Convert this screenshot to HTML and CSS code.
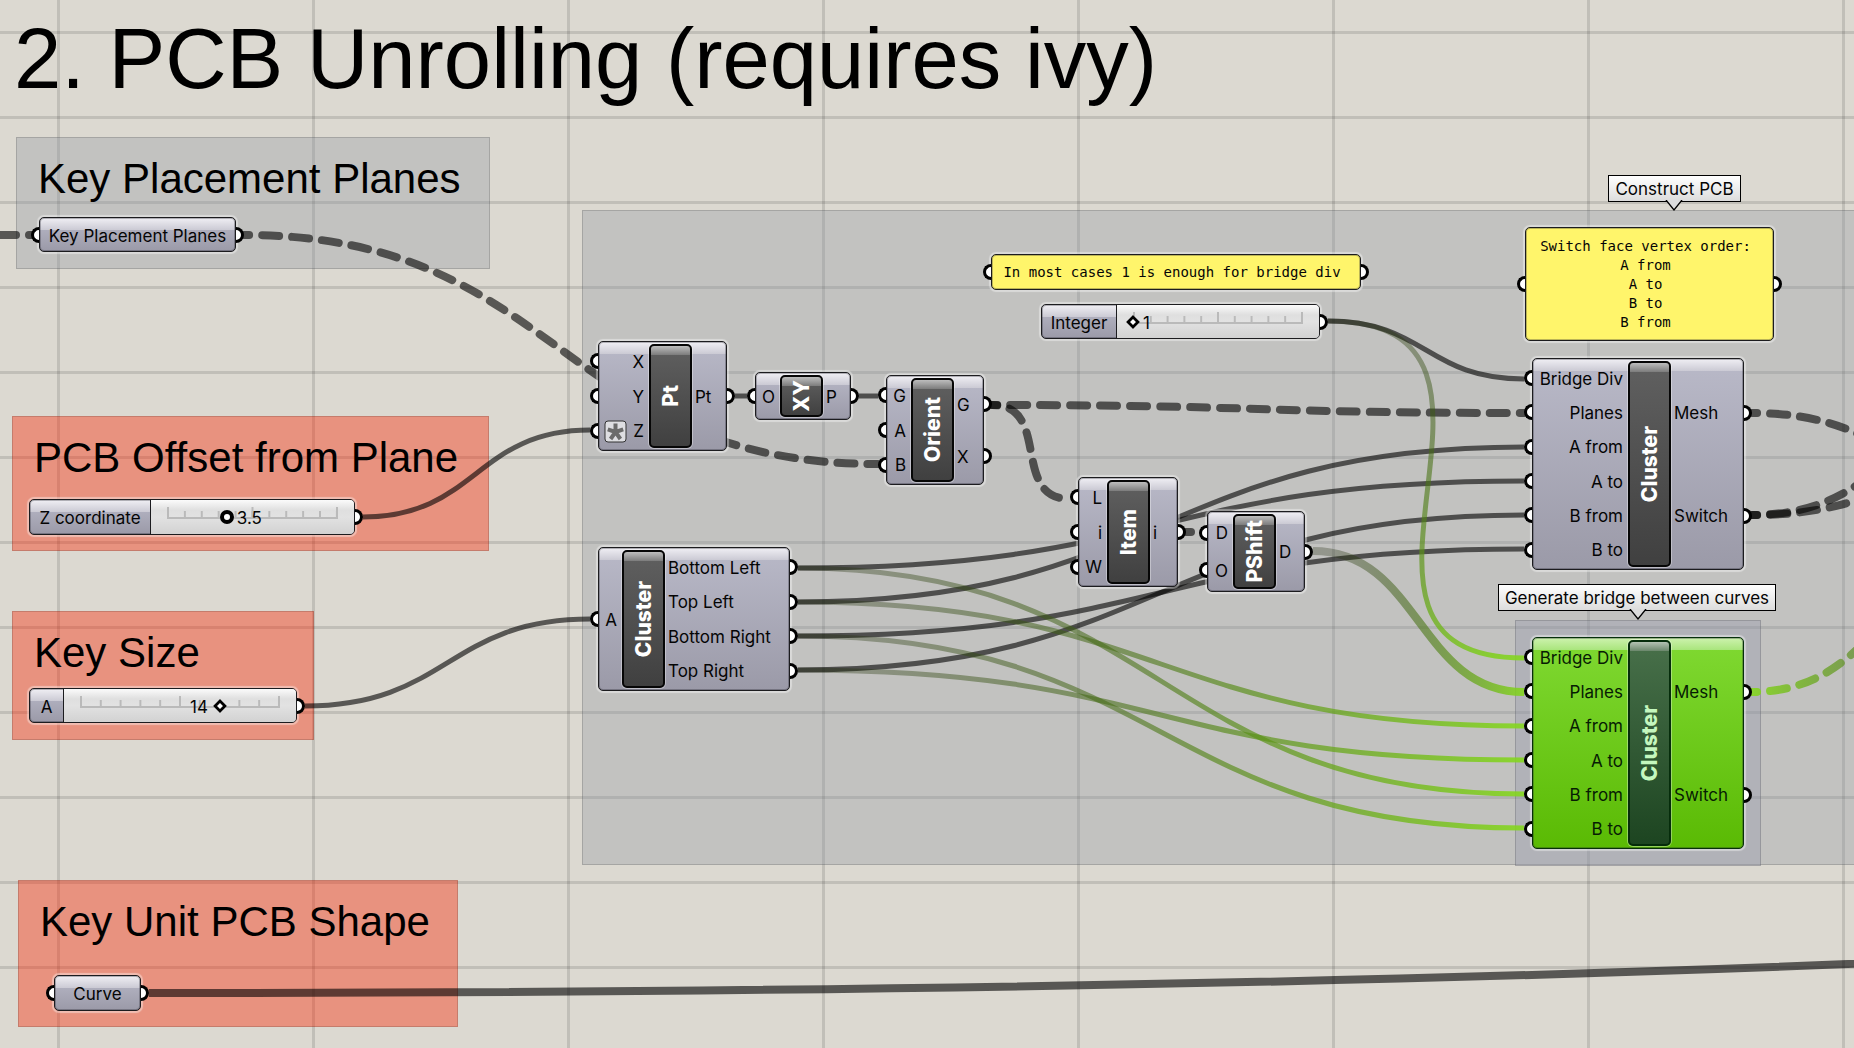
FILE: index.html
```html
<!DOCTYPE html>
<html lang="en">
<head>
<meta charset="utf-8">
<meta name="viewport" content="width=device-width, initial-scale=1">
<title>PCB Unrolling</title>
<link rel="stylesheet" href="styles.css">
</head>
<body>
<main class="canvas">
  <h1 class="title">2. PCB Unrolling (requires ivy)</h1>

  <section class="group red g-offset"><h2>PCB Offset from Plane</h2></section>
  <section class="group gray g-planes"><h2>Key Placement Planes</h2></section>
  <section class="group red g-size"><h2>Key Size</h2></section>
  <section class="group red g-shape"><h2>Key Unit PCB Shape</h2></section>
  <div class="group gray g-main"></div>
  <div class="group violet g-bridge"></div>

  <svg class="wires" aria-hidden="true">
    <defs>
      <linearGradient id="long" gradientUnits="userSpaceOnUse" x1="798" y1="0" x2="1524" y2="0">
        <stop class="s0" offset="0"/><stop class="s1" offset=".5"/><stop class="s2" offset="1"/>
      </linearGradient>
      <linearGradient id="short" gradientUnits="userSpaceOnUse" x1="1328" y1="0" x2="1524" y2="0">
        <stop class="s0" offset="0"/><stop class="s1" offset=".5"/><stop class="s2" offset="1"/>
      </linearGradient>
      <linearGradient id="tall" gradientUnits="userSpaceOnUse" x1="1328" y1="321" x2="1524" y2="658">
        <stop class="s0" offset="0"/><stop class="s1" offset=".5"/><stop class="s2" offset="1"/>
      </linearGradient>
      <linearGradient id="leaving" gradientUnits="userSpaceOnUse" x1="1752" y1="0" x2="2000" y2="0">
        <stop class="s2" offset="0"/><stop class="s1" offset=".5"/><stop class="s0" offset="1"/>
      </linearGradient>
    </defs>
    <g class="list">
      <path class="in" d="M-1 235H32"/>
      <path d="M244 235C561 235 561 464 878 464"/>
      <path d="M992 405C1258 405 1258 413 1524 413"/>
      <path d="M992 405C1052 405 1010 499 1070 499"/>
      <path d="M1186 532H1199"/>
      <path d="M1752 413C1902 413 1902 502 2052 502"/>
      <path d="M1752 515C1902 515 1902 384 2052 384"/>
      <path d="M1752 515C1902 515 1902 449 2052 449"/>
      <path class="hot" d="M1752 692C1902 692 1902 505 2052 505"/>
    </g>
    <g class="item">
      <path d="M363 517C476 517 476 430 590 430"/>
      <path d="M305 706C448 706 448 619 590 619"/>
      <path d="M735 396H747"/>
      <path d="M859 396H878"/>
      <path d="M1328 321C1426 321 1426 379 1524 379"/>
      <path d="M798 568C1161 568 1161 481 1524 481"/>
      <path d="M798 602C1161 602 1161 447 1524 447"/>
      <path d="M798 636C1161 636 1161 549 1524 549"/>
      <path d="M798 670C1161 670 1161 515 1524 515"/>
      <path class="thick" d="M149 993C2649 993 2649 857 5149 857"/>
    </g>
    <g class="item selected">
      <path d="M798 568C1161 568 1161 794 1524 794"/>
      <path d="M798 602C1161 602 1161 726 1524 726"/>
      <path d="M798 636C1161 636 1161 828 1524 828"/>
      <path d="M798 670C1161 670 1161 760 1524 760"/>
      <path class="tall" d="M1328 321C1566 321 1290 658 1524 658"/>
      <path class="thick" d="M1313 551C1419 551 1419 692 1524 692"/>
    </g>
  </svg>

  <div class="node param port-in port-out n-planes">Key Placement Planes</div>

  <div class="node slider port-out n-z">
    <label for="z">Z coordinate</label>
    <div class="track">
      <span class="ruler"></span>
      <input class="round" id="z" type="range" min="0" max="10" step="0.1" value="3.5">
      <output for="z" class="after" style="--at: .35">3.5</output>
    </div>
  </div>

  <div class="node slider port-out n-a">
    <label for="a">A</label>
    <div class="track">
      <span class="ruler"></span>
      <input id="a" type="range" min="0" max="20" value="14">
      <output for="a" class="before" style="--at: .7">14</output>
    </div>
  </div>

  <div class="node param port-in port-out n-curve">Curve</div>

  <div class="node comp n-pt">
    <ul class="ins"><li>X</li><li>Y</li><li>
      <svg class="badge" viewBox="0 0 23 23" aria-hidden="true"><rect x="1" y="1" width="21" height="21" rx="3"/><path d="M11.500 12V3.500M11.500 12L3.800 9.400M11.500 12L19.200 9.400M11.500 12L6.600 19M11.500 12L16.400 19"/></svg>Z</li></ul>
    <div class="core"><span>Pt</span></div>
    <ul class="outs"><li>Pt</li></ul>
  </div>

  <div class="node comp n-xy">
    <ul class="ins"><li>O</li></ul>
    <div class="core"><span>XY</span></div>
    <ul class="outs"><li>P</li></ul>
  </div>

  <div class="node comp n-orient">
    <ul class="ins"><li>G</li><li>A</li><li>B</li></ul>
    <div class="core"><span>Orient</span></div>
    <ul class="outs"><li>G</li><li>X</li></ul>
  </div>

  <div class="node comp n-corners">
    <ul class="ins"><li>A</li></ul>
    <div class="core"><span>Cluster</span></div>
    <ul class="outs"><li>Bottom Left</li><li>Top Left</li><li>Bottom Right</li><li>Top Right</li></ul>
  </div>

  <div class="node comp n-item">
    <ul class="ins"><li>L</li><li>i</li><li>W</li></ul>
    <div class="core"><span>Item</span></div>
    <ul class="outs"><li>i</li></ul>
  </div>

  <div class="node comp n-pshift">
    <ul class="ins"><li>D</li><li>O</li></ul>
    <div class="core"><span>PShift</span></div>
    <ul class="outs"><li>D</li></ul>
  </div>

  <div class="node panel port-in port-out n-note"><p>In most cases 1 is enough for bridge div</p></div>

  <div class="node slider port-out n-int">
    <label for="int">Integer</label>
    <div class="track">
      <span class="ruler"></span>
      <input id="int" type="range" min="1" max="11" value="1">
      <output for="int" class="after" style="--at: 0">1</output>
    </div>
  </div>

  <div class="tag t-construct">Construct PCB
    <svg viewBox="0 0 18 11" aria-hidden="true"><path d="M1 0L9 10L17 0"/></svg>
  </div>

  <div class="node panel port-in port-out n-order">
    <p>Switch face vertex order:<br>A from<br>A to<br>B to<br>B from</p>
  </div>

  <div class="node comp n-mesh">
    <ul class="ins"><li>Bridge Div</li><li>Planes</li><li>A from</li><li>A to</li><li>B from</li><li>B to</li></ul>
    <div class="core"><span>Cluster</span></div>
    <ul class="outs"><li>Mesh</li><li>Switch</li></ul>
  </div>

  <div class="tag t-bridge">Generate bridge between curves
    <svg viewBox="0 0 18 11" aria-hidden="true"><path d="M1 0L9 10L17 0"/></svg>
  </div>

  <div class="node comp active n-bridge">
    <ul class="ins"><li>Bridge Div</li><li>Planes</li><li>A from</li><li>A to</li><li>B from</li><li>B to</li></ul>
    <div class="core"><span>Cluster</span></div>
    <ul class="outs"><li>Mesh</li><li>Switch</li></ul>
  </div>
</main>
</body>
</html>
```
FILE: styles.css
```css
*, *::before, *::after { box-sizing: border-box; }

html, body { margin: 0; height: 100%; }

body {
  overflow: hidden;
  font: 17px/20px Inter, "Liberation Sans", sans-serif;
  color: #050505;
}

/* Canvas with a 255 x 85 grid */
.canvas {
  position: relative;
  min-height: 100%;
  overflow: hidden;
  background-color: #dcd9d1;
  background-image:
    linear-gradient(90deg, rgba(0, 0, 0, .12) 3px, transparent 3px),
    linear-gradient(rgba(0, 0, 0, .12) 3px, transparent 3px);
  background-size: 255px 85px;
  background-position: 57px 31px;
}

.title, .group h2 {
  margin: 0;
  font-family: "Liberation Sans", Arial, sans-serif;
  font-weight: 400;
  white-space: nowrap;
  color: #000;
}

.title { position: absolute; left: 14px; top: 16px; font-size: 85px; line-height: 85px; }

/* Groups */
.group { position: absolute; padding: 20px 21px; border: 1px solid rgba(0, 0, 0, .15); }
.group h2 { font-size: 42px; line-height: 42px; }
.gray { background: rgba(146, 151, 160, .35); }
.red { background: rgba(250, 40, 4, .4); }
.violet { background: rgba(146, 148, 169, .35); }

.g-planes { left: 16px; top: 137px; width: 474px; height: 132px; }
.g-offset { left: 12px; top: 416px; width: 477px; height: 135px; }
.g-size { left: 12px; top: 611px; width: 302px; height: 129px; }
.g-shape { left: 18px; top: 880px; width: 440px; height: 147px; }
.g-main { left: 582px; top: 210px; right: -2px; height: 655px; }
.g-bridge { left: 1515px; top: 620px; width: 246px; height: 246px; }

/* Wires */
.wires { position: absolute; left: 0; top: 0; width: 100%; height: 100%; overflow: visible; }
.wires path { fill: none; }
.item path { stroke-width: 5; stroke: rgba(0, 0, 0, .6); }
.item .thick { stroke-width: 8; }
.list path {
  stroke: rgba(0, 0, 0, .6);
  stroke-width: 8;
  stroke-linecap: round;
  stroke-dasharray: 17 13;
  stroke-dashoffset: 12;
}
.list .in { stroke-dashoffset: 0; }
.list .hot { stroke: url(#leaving); }
.selected path { stroke: url(#long); }
.selected .tall { stroke: url(#tall); }
.selected .thick { stroke: url(#short); }
.s0 { stop-color: rgb(20, 30, 0); stop-opacity: .27; }
.s1 { stop-color: rgb(75, 120, 20); stop-opacity: .6; }
.s2 { stop-color: rgb(132, 216, 28); stop-opacity: .88; }

/* Nodes */
.node {
  position: absolute;
  display: flex;
  border: 1px solid #1c1c1f;
  border-radius: 5px;
  background:
    linear-gradient(#f0eff4, #cbcad4) 0 0 / 100% 12px no-repeat,
    linear-gradient(#b9b9c8, #9b9aa8);
  box-shadow: inset 0 0 0 1px rgba(30, 30, 40, .3), 0 0 1px 2px rgba(255, 255, 255, .4);
}

/* Half-round grips on the left and right edges */
.port-in::before, .port-out::after, .ins li::before, .outs li::after {
  content: "";
  position: absolute;
  top: calc(50% - 8px);
  width: 8px;
  height: 16px;
  border: 3px solid #000;
  background: #fff;
}
.port-in::before, .ins li::before { left: -9px; border-right: 0; border-radius: 8px 0 0 8px; }
.port-out::after, .outs li::after { right: -9px; border-left: 0; border-radius: 0 8px 8px 0; }

.param { align-items: center; justify-content: center; padding-top: 2px; white-space: nowrap; }
.n-planes { left: 39px; top: 217px; width: 197px; height: 35px; }
.n-curve { left: 54px; top: 975px; width: 87px; height: 36px; }

/* Component: inputs, name bar, outputs */
.comp { padding: 2px 0; }
.comp ul { display: flex; flex-direction: column; margin: 0; padding: 0; list-style: none; }
.comp li {
  position: relative;
  flex: 1;
  display: flex;
  align-items: center;
  padding: 1px 5px 0 3px;
  white-space: nowrap;
}
.ins { flex: none; width: var(--in); }
.ins li { justify-content: flex-end; }
.outs { flex: 1; }

.core {
  flex: none;
  width: 43px;
  display: flex;
  align-items: center;
  justify-content: center;
  border: 2px solid #060606;
  border-radius: 5px;
  background:
    linear-gradient(#bdbdbd, #7c7c7c) 0 0 / 100% 9px no-repeat,
    linear-gradient(#606060, #404040);
  box-shadow: 0 0 0 1px rgba(255, 255, 255, .35);
  color: #fff;
  font-size: 21px;
  line-height: 24px;
  font-weight: 800;
}
.core span { writing-mode: vertical-rl; transform: rotate(180deg); }

.badge { width: 23px; height: 23px; margin-right: auto; margin-left: 2px; }
.badge rect { fill: #dedee2; stroke: #333; }
.badge path { stroke: #6b6b6b; stroke-width: 4; fill: none; }

.n-pt { --in: 50px; left: 598px; top: 341px; width: 129px; height: 110px; }
.n-xy { --in: 24px; left: 755px; top: 372px; width: 96px; height: 48px; }
.n-orient { --in: 24px; left: 886px; top: 375px; width: 98px; height: 110px; }
.n-corners { --in: 23px; left: 598px; top: 547px; width: 192px; height: 144px; }
.n-item { --in: 28px; left: 1078px; top: 477px; width: 100px; height: 110px; }
.n-pshift { --in: 25px; left: 1207px; top: 511px; width: 98px; height: 81px; }
.n-mesh { --in: 95px; left: 1532px; top: 358px; width: 212px; height: 212px; }
.n-bridge { --in: 95px; left: 1532px; top: 637px; width: 212px; height: 212px; }

.active {
  border-color: #06300a;
  color: #071c04;
  background:
    linear-gradient(#cdf2ae, #a9e57c) 0 0 / 100% 12px no-repeat,
    linear-gradient(#80d932, #5aba04);
}
.active .core {
  border-color: #052c0b;
  color: #c4f7be;
  background:
    linear-gradient(#b3c2b3, #6b876c) 0 0 / 100% 9px no-repeat,
    linear-gradient(#48704a, #1d4521);
}

/* Sliders */
.slider label {
  display: flex;
  align-items: center;
  justify-content: center;
  width: var(--label);
  padding-top: 2px;
  border-right: 1px solid #1c1c1f;
  white-space: nowrap;
}
.track {
  position: relative;
  flex: 1;
  border-radius: 0 4px 4px 0;
  background: linear-gradient(#fbfbfb, #dfdfdf 30%, #e2e2e2 50%, #d2d2d2);
}
.ruler {
  position: absolute;
  left: 16px;
  right: 16px;
  top: 7px;
  height: 12px;
  border-bottom: 2px solid #bababa;
  background:
    linear-gradient(90deg, #bababa 2px, transparent 2px) 0 0 / calc(50% - 1px) 10px repeat-x,
    linear-gradient(90deg, #bababa 2px, transparent 2px) 0 4px / calc(10% - .2px) 6px repeat-x;
}
.track input {
  appearance: none;
  position: absolute;
  left: 9px;
  top: 9px;
  width: calc(100% - 18px);
  height: 16px;
  margin: 0;
  background: transparent;
}
.track input::-webkit-slider-thumb {
  -webkit-appearance: none;
  width: 14px;
  height: 14px;
  border: 4px solid #000;
  background: #fff;
  transform: rotate(45deg) scale(.7);
}
.track input.round::-webkit-slider-thumb { border-radius: 50%; transform: none; }
.track output { position: absolute; top: 8px; }
.after { left: calc(16px + (100% - 32px) * var(--at) + 10px); }
.before { right: calc(16px + (100% - 32px) * (1 - var(--at)) + 12px); }

.n-z { --label: 121px; left: 29px; top: 499px; width: 326px; height: 36px; }
.n-a { --label: 34px; left: 29px; top: 688px; width: 268px; height: 35px; }
.n-int { --label: 75px; left: 1041px; top: 304px; width: 279px; height: 35px; }

/* Panels */
.panel {
  align-items: center;
  justify-content: center;
  padding-right: 8px;
  background: #fff56b;
  font: 14px/19px "DejaVu Sans Mono", monospace;
  text-align: center;
  white-space: nowrap;
}
.panel p { margin: 0; }
.n-note { left: 991px; top: 254px; width: 370px; height: 36px; }
.n-order { left: 1525px; top: 227px; width: 249px; height: 114px; }

/* Tags */
.tag {
  position: absolute;
  height: 27px;
  padding: 3px 0 0;
  border: 1px solid #000;
  background: linear-gradient(#fff, #dcdcdc);
  text-align: center;
  white-space: nowrap;
}
.tag svg { position: absolute; top: 24px; left: var(--tip); width: 18px; height: 11px; }
.tag path { fill: #dcdcdc; stroke: #000; stroke-width: 1.300; }
.t-construct { --tip: 56px; left: 1608px; top: 175px; width: 133px; }
.t-bridge { --tip: 130px; left: 1498px; top: 584px; width: 278px; }
```
